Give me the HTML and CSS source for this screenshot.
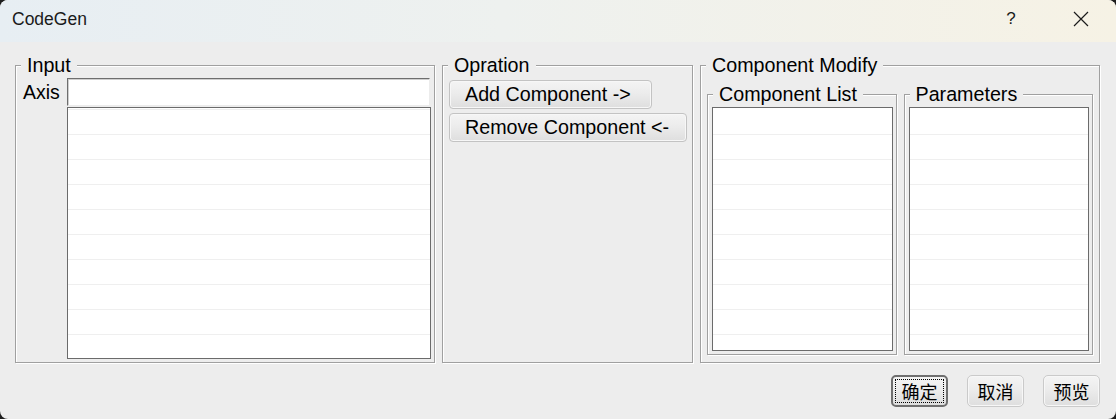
FILE: index.html
```html
<!DOCTYPE html>
<html lang="en">
<head>
<meta charset="utf-8">
<title>CodeGen</title>
<link rel="stylesheet" href="styles.css">
</head>
<body>
<div class="window">
  <div class="titlebar">
    <span class="title">CodeGen</span>
    <span class="tb-btn help">?</span>
    <span class="tb-btn close">
      <svg width="16" height="16" viewBox="0 0 16 16" aria-hidden="true">
        <path d="M1 1 L15 15 M15 1 L1 15" stroke="#1b1b1b" stroke-width="1.2" fill="none"/>
      </svg>
    </span>
  </div>
  <div class="client">
    <div class="groups">
      <fieldset class="group g-input">
        <legend>Input</legend>
        <div class="input-grid">
          <label class="axis-label" for="axis">Axis</label>
          <input id="axis" class="axis" type="text">
          <div class="list input-list"></div>
        </div>
      </fieldset>
      <fieldset class="group g-op">
        <legend>Opration</legend>
        <div class="op-buttons">
          <button class="btn op-add">Add Component -&gt;</button>
          <button class="btn op-remove">Remove Component &lt;-</button>
        </div>
      </fieldset>
      <fieldset class="group g-mod">
        <legend>Component Modify</legend>
        <div class="mod-row">
          <fieldset class="group sub">
            <legend>Component List</legend>
            <div class="sub-body"><div class="list sub-list"></div></div>
          </fieldset>
          <fieldset class="group sub">
            <legend>Parameters</legend>
            <div class="sub-body"><div class="list sub-list"></div></div>
          </fieldset>
        </div>
      </fieldset>
    </div>
    <div class="actions">
      <button class="btn dlg default"><span class="focus">确定</span></button>
      <button class="btn dlg">取消</button>
      <button class="btn dlg">预览</button>
    </div>
  </div>
</div>
</body>
</html>
```

FILE: styles.css
```css
* { box-sizing: border-box; }

html {
  background: #1e1e1e;
}

body {
  margin: 0;
  width: 1116px;
  height: 419px;
  overflow: hidden;
  font-family: "Liberation Sans", Arial, sans-serif;
  color: #000;
}

.window {
  width: 1116px;
  height: 419px;
  background: #ededed;
  border-radius: 8px;
  overflow: hidden;
}

/* title bar */
.titlebar {
  height: 42px;
  display: flex;
  align-items: center;
  padding: 0 12px;
  background: linear-gradient(90deg, #e7eef3 0%, #eef1ef 45%, #f6f2e5 100%);
}

.title {
  font-size: 17.5px;
  color: #1a1a1a;
  padding-bottom: 4px;
}

.tb-btn {
  display: flex;
  align-items: center;
  justify-content: center;
  width: 46px;
  height: 42px;
  padding-bottom: 4px;
}

.help {
  margin-left: auto;
  margin-right: 24px;
  font-size: 17px;
  color: #1a1a1a;
}

/* client area */
.client {
  padding: 13px 16px 0 15px;
}

.groups {
  display: flex;
  gap: 7px;
  height: 308px;
}

.group {
  margin: 0;
  min-width: 0;
  border: 1px solid #a0a0a0;
  box-shadow: 1px 1px 0 #ffffff, inset 1px 1px 0 #ffffff;
  padding: 0;
}

.group > legend {
  margin-left: 5px;
  padding: 0 6px;
  font-size: 19.7px;
  line-height: 20px;
  height: 20px;
  background: #ededed;
}

.g-input {
  width: 420px;
}

.input-grid {
  display: grid;
  grid-template-columns: 44px 1fr;
  grid-template-rows: 28px 252px;
  row-gap: 1px;
  padding: 3px 3px 3px 7px;
}

.axis-label {
  font-size: 19.5px;
  line-height: 28px;
}

.axis {
  margin: 0 1px 0 0;
  height: 28px;
  border: 1px solid #ececec;
  border-top-color: #6e6e6e;
  border-left-color: #6e6e6e;
  box-shadow: inset 1px 1px 0 #cfcfcf;
  background: #fff;
  font: inherit;
  outline: none;
}

.list {
  border: 1px solid #6b6b6b;
  background-color: #fff;
  background-image: repeating-linear-gradient(
    to bottom,
    transparent 0px,
    transparent 24px,
    #efefef 24px,
    #efefef 25px
  );
  background-position: 0 2px;
}

.input-list {
  grid-column: 2;
}

.g-op {
  width: 251px;
}

.op-buttons {
  display: flex;
  flex-direction: column;
  align-items: flex-start;
  gap: 4px;
  padding: 5px 6px 0 6px;
}

.btn {
  font-family: "Liberation Sans", Arial, sans-serif;
  font-size: 19.7px;
  color: #000;
  border: 1px solid #c3c3c3;
  border-radius: 4px;
  background: linear-gradient(to bottom, #f4f4f4 0%, #ececec 45%, #dedede 100%);
  box-shadow: inset 0 0 0 1px #f7f7f7;
  padding: 0;
  margin: 0;
  cursor: default;
}

.op-add,
.op-remove {
  height: 29px;
  text-align: left;
  padding-left: 15px;
  line-height: 25px;
}

.op-add { width: 203px; }
.op-remove { width: 238px; }

.g-mod {
  flex: 1;
}

.mod-row {
  display: flex;
  gap: 7px;
  height: 287px;
  padding: 9px 6px 7px 6px;
}

.sub {
  flex: 1;
  display: flex;
  flex-direction: column;
}

.sub-body {
  flex: 1;
  display: flex;
  flex-direction: column;
  padding: 3px 3px 3px 4px;
}

.sub-list {
  flex: 1;
}

/* bottom buttons */
.actions {
  display: flex;
  justify-content: flex-end;
  gap: 19px;
  margin-top: 12px;
}

.dlg {
  width: 57px;
  height: 32px;
  font-family: "Noto Sans CJK SC", "Liberation Sans", sans-serif;
  font-size: 18px;
  line-height: 28px;
  border-color: #cacaca;
  border-radius: 5px;
  display: flex;
  align-items: center;
  justify-content: center;
}

.dlg.default {
  border: 2px solid #6f6f6f;
  box-shadow: none;
  padding: 2px;
}

.focus {
  display: flex;
  align-items: center;
  justify-content: center;
  width: 100%;
  height: 100%;
  border: 1px dotted #000;
}
```
